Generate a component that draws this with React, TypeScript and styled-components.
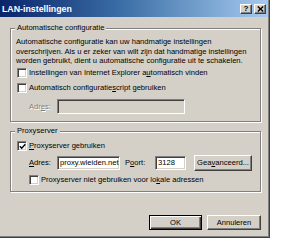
import React from "react";
import styled, { createGlobalStyle, css } from "styled-components";

const GlobalStyle = createGlobalStyle`
  html, body { margin: 0; padding: 0; background: #ffffff; }
  body { font-family: "Liberation Sans", Arial, sans-serif; font-size: 7.6px; color: #000; }
  * { box-sizing: border-box; }
`;

const Window = styled.div`
  width: 270px;
  height: 238px;
  background: #d4d0c8;
  border-right: 1px solid #404040;
  border-bottom: 1px solid #404040;
  box-shadow: inset -1px -1px 0 #808080;
  display: flex;
  flex-direction: column;
`;

const TitleBar = styled.div`
  height: 17px;
  margin-right: 1px;
  background: linear-gradient(to right, #0a246a 0%, #3a6ea5 45%, #a6caf0 100%);
  display: flex;
  align-items: center;
  padding: 0 2px 0 2px;
`;

const Title = styled.div`
  flex: 1;
  color: #ffffff;
  font-weight: bold;
  font-size: 8.8px;
  line-height: 10px;
`;

const CaptionButtons = styled.div`
  display: flex;
  gap: 2px;
`;

const CaptionButton = styled.div`
  width: 12px;
  height: 10px;
  background: #d4d0c8;
  border: 1px solid;
  border-color: #ffffff #404040 #404040 #ffffff;
  box-shadow: inset -1px -1px 0 #808080;
  display: flex;
  align-items: center;
  justify-content: center;
  font-weight: bold;
  font-size: 8px;
  line-height: 8px;
`;

const Body = styled.div`
  flex: 1;
  padding: 11px 8px 0 10px;
  display: flex;
  flex-direction: column;
`;

const Group = styled.div<{ $gap?: number; $pad: string }>`
  position: relative;
  border: 1px solid #808080;
  box-shadow: inset 1px 1px 0 #ffffff, 1px 1px 0 #ffffff;
  padding: ${(p) => p.$pad};
  margin-top: ${(p) => p.$gap ?? 0}px;
  display: flex;
  flex-direction: column;
`;

const GroupTitle = styled.span`
  position: absolute;
  top: -6px;
  left: 4px;
  padding: 0 2px;
  background: #d4d0c8;
  line-height: 10px;
`;

const Paragraph = styled.p`
  margin: 0;
  line-height: 9.5px;
  white-space: nowrap;
`;

const Row = styled.div<{ $indent?: number; $h?: number; $mt?: number }>`
  display: flex;
  align-items: center;
  height: ${(p) => p.$h ?? 15}px;
  margin-top: ${(p) => p.$mt ?? 0}px;
  padding-left: ${(p) => p.$indent ?? 0}px;
`;

const Box = styled.span`
  width: 10px;
  height: 10px;
  flex: none;
  background: #ffffff;
  border: 1px solid;
  border-color: #808080 #ffffff #ffffff #808080;
  box-shadow: inset 1px 1px 0 #404040, inset -1px -1px 0 #d4d0c8;
  display: flex;
  align-items: center;
  justify-content: center;
`;

const CheckText = styled.span`
  margin-left: 2px;
  line-height: 10px;
  white-space: nowrap;
`;

const Label = styled.span<{ $w: number; $disabled?: boolean; $ml?: number }>`
  width: ${(p) => p.$w}px;
  margin-left: ${(p) => p.$ml ?? 0}px;
  flex: none;
  white-space: nowrap;
  ${(p) =>
    p.$disabled &&
    css`
      color: #808080;
      text-shadow: 1px 1px 0 #ffffff;
    `}
`;

const Field = styled.div<{ $w: number; $h?: number; $disabled?: boolean }>`
  width: ${(p) => p.$w}px;
  height: ${(p) => p.$h ?? 15}px;
  flex: none;
  background: ${(p) => (p.$disabled ? "#d4d0c8" : "#ffffff")};
  border: 1px solid;
  border-color: #808080 #ffffff #ffffff #808080;
  box-shadow: inset 1px 1px 0 #404040, inset -1px -1px 0 #d4d0c8;
  padding: 0 2px;
  display: flex;
  align-items: center;
  overflow: hidden;
  white-space: nowrap;
`;

const Button = styled.div<{ $w: number; $h?: number; $default?: boolean; $ml?: number }>`
  width: ${(p) => p.$w}px;
  height: ${(p) => p.$h ?? 15}px;
  margin-left: ${(p) => p.$ml ?? 0}px;
  flex: none;
  display: flex;
  align-items: center;
  justify-content: center;
  background: #d4d0c8;
  white-space: nowrap;
  ${(p) =>
    p.$default
      ? css`
          border: 1px solid #000000;
          box-shadow: inset 1px 1px 0 #ffffff, inset -1px -1px 0 #404040, inset -2px -2px 0 #808080;
        `
      : css`
          border: 1px solid;
          border-color: #ffffff #404040 #404040 #ffffff;
          box-shadow: inset -1px -1px 0 #808080;
        `}
`;

const Footer = styled.div`
  display: flex;
  justify-content: flex-end;
  gap: 5px;
  margin-top: 23px;
`;

const U = styled.span`
  text-decoration: underline;
`;

const Check = () => (
  <svg width="7" height="7" viewBox="0 0 7 7">
    <path d="M0.8 3.2 L2.7 5.2 L6.3 1.2" fill="none" stroke="#000" strokeWidth="1.4" />
  </svg>
);

const CloseGlyph = () => (
  <svg width="7" height="6" viewBox="0 0 7 6">
    <path d="M0.8 0.5 L6.2 5.5 M6.2 0.5 L0.8 5.5" stroke="#000" strokeWidth="1.4" />
  </svg>
);

export default function App() {
  return (
    <>
      <GlobalStyle />
      <Window>
        <TitleBar>
          <Title>LAN-instellingen</Title>
          <CaptionButtons>
            <CaptionButton>?</CaptionButton>
            <CaptionButton>
              <CloseGlyph />
            </CaptionButton>
          </CaptionButtons>
        </TitleBar>
        <Body>
          <Group $pad="8px 6px 7px 5px">
            <GroupTitle>Automatische configuratie</GroupTitle>
            <Paragraph>
              Automatische configuratie kan uw handmatige instellingen
              <br />
              overschrijven. Als u er zeker van wilt zijn dat handmatige instellingen
              <br />
              worden gebruikt, dient u automatische configuratie uit te schakelen.
            </Paragraph>
            <Row $indent={1}>
              <Box />
              <CheckText>
                Instellingen van Internet Explorer a<U>u</U>tomatisch vinden
              </CheckText>
            </Row>
            <Row $indent={1}>
              <Box />
              <CheckText>
                Automatisch configuratie<U>s</U>cript gebruiken
              </CheckText>
            </Row>
            <Row $indent={13} $mt={3}>
              <Label $w={28} $disabled>
                Adr<U>e</U>s:
              </Label>
              <Field $w={128} $disabled />
            </Row>
          </Group>
          <Group $gap={9} $pad="7px 6px 3px 5px">
            <GroupTitle>Proxyserver</GroupTitle>
            <Row $indent={1}>
              <Box>
                <Check />
              </Box>
              <CheckText>
                <U>P</U>roxyserver gebruiken
              </CheckText>
            </Row>
            <Row $indent={13} $h={16} $mt={1}>
              <Label $w={28}>
                <U>A</U>dres:
              </Label>
              <Field $w={63} $h={14}>
                proxy.wleiden.net
              </Field>
              <Label $w={30} $ml={5}>
                P<U>o</U>ort:
              </Label>
              <Field $w={31} $h={14}>
                3128
              </Field>
              <Button $w={58} $h={16} $ml={8}>
                Gea<U>v</U>anceerd...
              </Button>
            </Row>
            <Row $indent={13} $mt={2}>
              <Box />
              <CheckText>
                Proxyserver niet gebruiken voor lo<U>k</U>ale adressen
              </CheckText>
            </Row>
          </Group>
          <Footer>
            <Button $w={53} $default>
              OK
            </Button>
            <Button $w={54}>Annuleren</Button>
          </Footer>
        </Body>
      </Window>
    </>
  );
}
